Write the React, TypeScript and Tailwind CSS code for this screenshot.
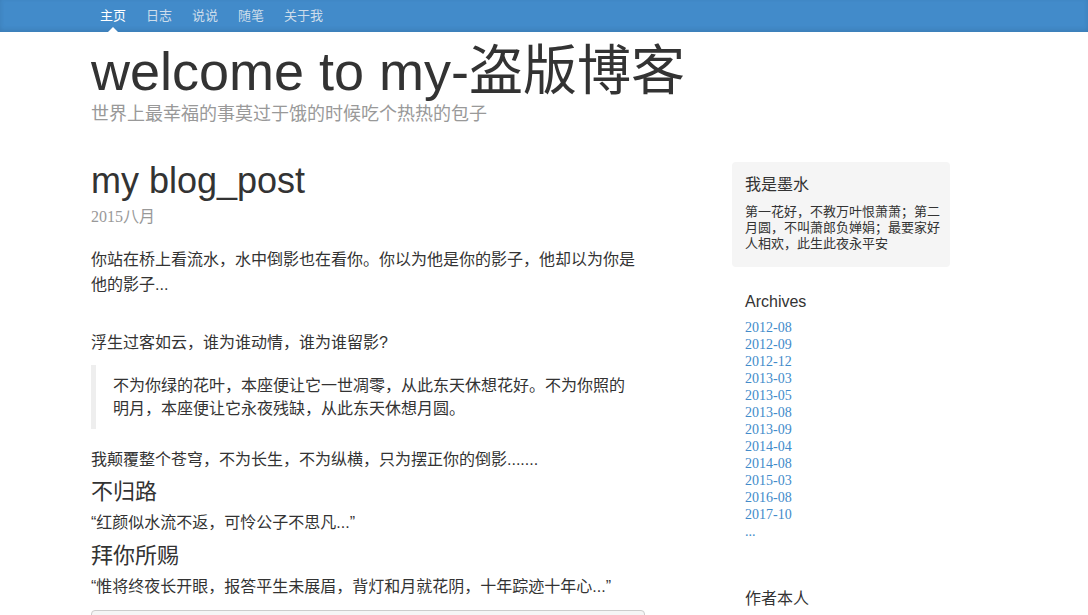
const navItems = ["主页", "日志", "说说", "随笔", "关于我"]

const archives = [
    "2012-08",
    "2012-09",
    "2012-12",
    "2013-03",
    "2013-05",
    "2013-08",
    "2013-09",
    "2014-04",
    "2014-08",
    "2015-03",
    "2016-08",
    "2017-10",
]

const App = () => {
    return (
        <div className="min-h-screen bg-white text-[#333] font-['Liberation_Sans','Noto_Sans_CJK_SC',sans-serif]">
            <div className="h-[32px] bg-[#428bca] shadow-[inset_0_-2px_5px_rgba(0,0,0,0.1)]">
                <nav className="flex pl-[90px]">
                    {navItems.map((item, i) => (
                        <a
                            key={item}
                            href="#"
                            className={`relative px-[10px] text-[13px] leading-[32px] ${i === 0 ? "text-white" : "text-[#cdddeb]"}`}
                        >
                            {item}
                            {i === 0 && (
                                <span className="absolute bottom-0 left-1/2 -ml-[5px] h-0 w-0 border-x-[5px] border-b-[5px] border-x-transparent border-b-white"></span>
                            )}
                        </a>
                    ))}
                </nav>
            </div>

            <div className="pl-[91px] pt-[9px]">
                <h1 className="text-[54px] leading-[60px] font-normal">welcome to my-盗版博客</h1>
                <p className="mt-[1px] text-[18px] leading-[24px] text-[#999]">世界上最幸福的事莫过于饿的时候吃个热热的包子</p>
            </div>

            <div className="flex pl-[91px] pt-[35px]">
                <div className="w-[554px] shrink-0">
                    <h2 className="text-[36px] leading-[40px] font-normal">my blog_post</h2>
                    <p className="mt-[6px] text-[16px] leading-[20px] text-[#999] font-['Liberation_Serif','Noto_Sans_CJK_SC',serif]">2015八月</p>
                    <p className="mt-[20px] text-[16px] leading-[25px]">
                        你站在桥上看流水，水中倒影也在看你。你以为他是你的影子，他却以为你是他的影子...
                    </p>
                    <p className="mt-[33px] text-[16px] leading-[25px]">浮生过客如云，谁为谁动情，谁为谁留影?</p>
                    <blockquote className="mt-[10px] border-l-[5px] border-[#eee] py-[9px] pl-[17px] pr-[15px] text-[16px] leading-[23px]">
                        不为你绿的花叶，本座便让它一世凋零，从此东天休想花好。不为你照的明月，本座便让它永夜残缺，从此东天休想月圆。
                    </blockquote>
                    <p className="mt-[18px] text-[16px] leading-[25px]">我颠覆整个苍穹，不为长生，不为纵横，只为摆正你的倒影.......</p>
                    <h3 className="mt-[6px] text-[22px] leading-[28px] font-normal">不归路</h3>
                    <p className="mt-[4px] text-[16px] leading-[25px]">“红颜似水流不返，可怜公子不思凡...”</p>
                    <h3 className="mt-[7px] text-[22px] leading-[28px] font-normal">拜你所赐</h3>
                    <p className="mt-[4px] text-[16px] leading-[25px]">“惟将终夜长开眼，报答平生未展眉，背灯和月就花阴，十年踪迹十年心...”</p>
                    <div className="mt-[11px] h-[40px] rounded-[4px] border border-[#ccc] bg-[#f5f5f5]"></div>
                </div>

                <aside className="ml-[87px] w-[218px] shrink-0 pt-[1px]">
                    <div className="rounded-[4px] bg-[#f5f5f5] pt-[12px] pl-[13px] pr-[8px] pb-[15px]">
                        <h4 className="text-[16px] leading-[22px] font-normal">我是墨水</h4>
                        <p className="mt-[8px] text-[13px] leading-[16px]">
                            第一花好，不教万叶恨萧萧；第二月圆，不叫萧郎负婵娟；最要家好人相欢，此生此夜永平安
                        </p>
                    </div>
                    <div className="pl-[13px]">
                        <h4 className="mt-[24px] text-[16px] leading-[22px] font-normal">Archives</h4>
                        <ol className="mt-[6px] text-[14px] leading-[17px] font-['Liberation_Serif',serif]">
                            {archives.map((a) => (
                                <li key={a}>
                                    <a href="#" className="text-[#428bca]">{a}</a>
                                </li>
                            ))}
                            <li>
                                <a href="#" className="text-[#428bca]">...</a>
                            </li>
                        </ol>
                        <h4 className="mt-[48px] text-[16px] leading-[22px] font-normal">作者本人</h4>
                    </div>
                </aside>
            </div>
        </div>
    )
}

export default App
